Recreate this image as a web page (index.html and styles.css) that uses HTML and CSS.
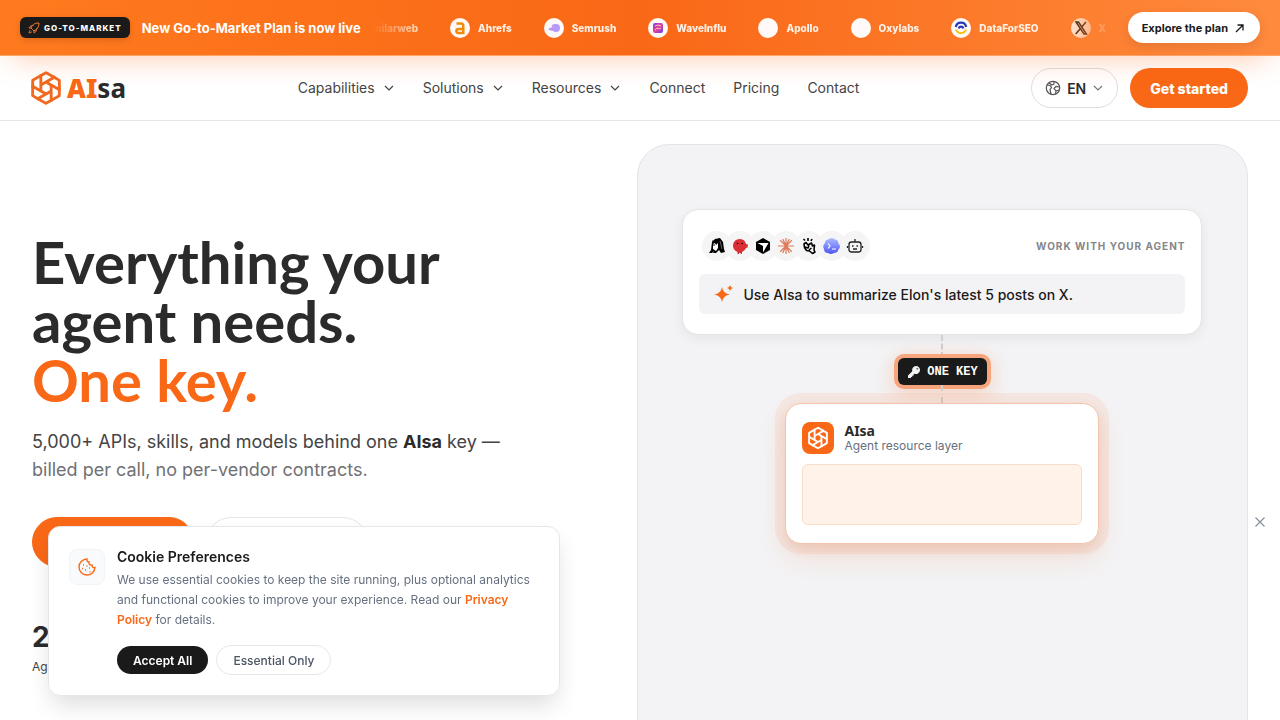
FILE: index.html
```html
<!DOCTYPE html>
<html lang="en">
<head>
<meta charset="utf-8">
<meta name="viewport" content="width=device-width, initial-scale=1">
<title>AIsa</title>
<link rel="stylesheet" href="styles.css">
</head>
<body>
<svg class="defs" aria-hidden="true">
  <symbol id="knot" viewBox="-17 -17 34 34">
    <g fill="none" stroke="currentColor" stroke-width="2.700" stroke-linejoin="round">
      <path id="blade" d="M12.600 2.500V-7.200L6.500 -10.800M-4.900 -2.800L0 -5.600L7 -9.700"/>
      <use href="#blade" transform="rotate(60)"/>
      <use href="#blade" transform="rotate(120)"/>
      <use href="#blade" transform="rotate(180)"/>
      <use href="#blade" transform="rotate(240)"/>
      <use href="#blade" transform="rotate(300)"/>
    </g>
  </symbol>
  <symbol id="chevron" viewBox="0 0 12 12"><path d="M2 4l4 4 4-4" fill="none" stroke="currentColor" stroke-width="1.200"/></symbol>
</svg>

<aside class="promo">
  <span class="badge">
    <svg viewBox="0 0 24 24" width="12" height="12" fill="none" stroke="currentColor" stroke-width="2"><path d="M9 15l-3-3c2-6 6-10 16-10 0 8-4 13-10 16zM6 12H2s1-5 9-5M12 18v4s5-1 5-9M5 16c-2 1-3 6-3 6s5-1 6-3"/></svg>
    GO-TO-MARKET
  </span>
  <strong class="promo-text">New Go-to-Market Plan is now live</strong>
  <div class="marquee">
    <ul class="track">
      <li><i class="dot"></i>Similarweb</li>
      <li><i class="dot"><svg viewBox="0 0 20 20"><path d="M6.500 5.500h4.500q2.300 0 2.300 2.300V15H8.700q-2.300 0-2.300-2t2.300-2h4.500" fill="none" stroke="#f18a08" stroke-width="2.500"/></svg></i>Ahrefs</li>
      <li><i class="dot"><svg viewBox="0 0 20 20"><circle cx="12" cy="10" r="4" fill="#b79af8"/><path d="M4 11l6-3v5l-4-.500zM7 7l5-1-2 3z" fill="#b79af8"/></svg></i>Semrush</li>
      <li><i class="dot"><svg viewBox="0 0 20 20"><defs><linearGradient id="wave" x2="1" y2="1"><stop stop-color="#7044e8"/><stop offset=".5" stop-color="#ed3e9c"/><stop offset="1" stop-color="#5647ed"/></linearGradient></defs><rect x="5" y="5" width="10" height="10" rx="2" fill="url(#wave)"/><path d="M7 8q3-2 6 0M7 12l2-2 2 1 2-1" fill="none" stroke="#ffc4a7"/></svg></i>WaveInflu</li>
      <li><i class="dot"></i>Apollo</li>
      <li><i class="dot"></i>Oxylabs</li>
      <li><i class="dot"><svg viewBox="0 0 20 20" fill="none" stroke-width="2.200"><path d="M4.800 9a5.300 5.300 0 0 1 10.400 0M7.800 10.500a2.300 2.300 0 0 1 4.500 0" stroke="#2639b8"/><path d="M5 11.500a5.300 5.300 0 0 0 10 0" stroke="#f4c51c"/></svg></i>DataForSEO</li>
      <li><i class="dot"><svg viewBox="0 0 20 20"><path d="M5 4h2.500L15.500 16H13zM15 4l-4.600 5.300M9 11l-4.300 5" fill="none" stroke="#111" stroke-width="1.500"/></svg></i>X</li>
    </ul>
  </div>
  <a class="promo-link" href="#plan">Explore the plan
    <svg viewBox="0 0 12 12" width="12" height="12" fill="none" stroke="currentColor" stroke-width="1.300"><path d="M2 10l7-7M3.500 3h5.500v5.500"/></svg>
  </a>
</aside>

<header class="header">
  <a class="logo" href="#home"><svg width="36" height="36"><use href="#knot"/></svg><span class="wordmark"><b>AI</b>sa</span></a>
  <nav class="nav">
    <button type="button">Capabilities <svg width="12" height="12"><use href="#chevron"/></svg></button>
    <button type="button">Solutions <svg width="12" height="12"><use href="#chevron"/></svg></button>
    <button type="button">Resources <svg width="12" height="12"><use href="#chevron"/></svg></button>
    <a href="#connect">Connect</a>
    <a href="#pricing">Pricing</a>
    <a href="#contact">Contact</a>
  </nav>
  <div class="actions">
    <button class="lang" type="button">
      <svg class="globe" viewBox="0 0 16 16" width="16" height="16" fill="none" stroke="currentColor" stroke-width="1.200"><circle cx="8" cy="8" r="6.700"/><path d="M2 5l3 .5 1.500 2L5 9.500 6 14M4 3l3 2 2-1V1.500M14.500 7L11 6.500 9 8.500l2 2.500-.5 3M11 11l3-1"/></svg>
      EN <svg class="muted" width="12" height="12"><use href="#chevron"/></svg>
    </button>
    <a class="start" href="#start">Get started</a>
  </div>
</header>

<main class="hero">
  <section class="intro">
    <h1>Everything your<br>agent needs.<br><span>One key.</span></h1>
    <p class="lead">5,000+ APIs, skills, and models behind one <strong>AIsa</strong> key —<br><span>billed per call, no per-vendor contracts.</span></p>
    <div class="ctas"><a class="cta primary" href="#start">Get started</a><a class="cta" href="#contact">Contact</a></div>
    <div class="stat"><strong>2</strong><span>Ag</span></div>
  </section>

  <section class="stage">
    <article class="prompt-card">
      <div class="prompt-head">
        <div class="agents">
          <span><svg viewBox="0 0 18 18"><path d="M1 16l2-3 1-8 3-3 5-1 3 4 1 7 1 3-4 1-2-3-3 3H5l1-2-2 2z"/><path d="M5 7l2-1 1 2 2-2v5l-2 3-3-2z" fill="#fff"/><path d="M5 8h2M4 4l7 1" stroke="#000"/><path d="M12 4l2 8" stroke="#aaa" stroke-width=".6"/></svg></span>
          <span><svg viewBox="0 0 18 18"><path d="M9 2a6.500 6.500 0 0 1 6 5l2 .5-.5 3L15 11a7 7 0 0 1-4 4v2H9.800v-1H8v1H6.500v-2A7 7 0 0 1 2 8a6.500 6.500 0 0 1 7-6z" fill="#dc2f35"/><circle cx="6.500" cy="6.500" r=".8"/><circle cx="11" cy="6.500" r=".8"/></svg></span>
          <span><svg viewBox="0 0 18 18"><path d="M9 1l7 4v8l-7 4-7-4V5z"/><path d="M3.500 6h11L9 15.500V9z" fill="#fff"/></svg></span>
          <span><svg viewBox="0 0 18 18" stroke="#dd7958" stroke-width="1.200"><path d="M9 1v16M1 9h16M3.200 3.300l11.600 11.400M3.200 14.700L14.800 3.300M5.700 1.900l6.600 14.200M5.700 16.100l6.600-14.200"/></svg></span>
          <span><svg viewBox="0 0 18 18" fill="none" stroke="#000" stroke-width="1.600" stroke-linejoin="round"><path d="M4 7l2-1.500 2 2.500 3.500-2 1 3 2-1-.5 5 1 2-2.500 1.500-3-2.500-3-.5-2-3zM5 10l3 1 1-2.500M9 13l2.500-2M5 3.500L3.500 2M8 4V1M11 4l1-2"/></svg></span>
          <span><svg viewBox="0 0 18 18"><defs><linearGradient id="cloud" x2="0" y2="1"><stop stop-color="#aebbff"/><stop offset="1" stop-color="#4f57f5"/></linearGradient></defs><path d="M5 2.500q4-3 7 0 3 0 3.500 4 3 3 0 6-1 3.500-4.500 3.500-3 2-6 0-4 0-4-4-2-3 1-6 0-3 3-3.500z" fill="url(#cloud)"/><path d="M5 6.500l2 2.500-2 2.500M9 12h4" fill="none" stroke="#fff" stroke-width="1.200"/></svg></span>
          <span><svg viewBox="0 0 18 18" fill="none" stroke="#222" stroke-width="1.300"><rect x="3" y="5" width="12" height="10" rx="2.500"/><path d="M9 5V2M1.500 9v2M16.500 9v2M6 9h1.500M10.500 9H12M7 12h4"/></svg></span>
        </div>
        <span class="eyebrow">WORK WITH YOUR AGENT</span>
      </div>
      <p class="prompt"><svg viewBox="0 0 20 20" width="20" height="20" fill="#f96816"><path d="M9 3q1 6.500 8 7.500-7 1-8 7.500-1-6.500-8-7.500 7-1 8-7.500zM17 1q.5 2.500 3 3-2.500.5-3 3-.5-2.500-3-3 2.500-.5 3-3z"/></svg>Use AIsa to summarize Elon's latest 5 posts on X.</p>
    </article>
    <div class="wire"></div>
    <div class="key"><svg viewBox="0 0 14 14" width="14" height="14"><path d="M9 1a4 4 0 1 1-1.500 7.700L6.500 9.500v1.200H5.200V12H4v1H1v-2.500l4.300-4.200A4 4 0 0 1 9 1z" fill="#f4f4f4"/><circle cx="10.300" cy="3.700" r="1" fill="#777"/></svg>ONE KEY</div>
    <div class="wire lower"></div>
    <article class="layer-card">
      <div class="layer-head">
        <span class="layer-logo"><svg width="24" height="24"><use href="#knot"/></svg></span>
        <div><h2>AIsa</h2><p>Agent resource layer</p></div>
      </div>
      <div class="slot"></div>
    </article>
  </section>
</main>

<section class="cookie" aria-labelledby="cookie-title">
  <span class="cookie-icon"><svg viewBox="0 0 20 20" width="20" height="20" fill="none" stroke="#f96816" stroke-width="1.400"><path d="M10 2a8 8 0 1 0 8 8.500c-2 .5-3-.5-3-2.500-2 .5-3.500-.8-3-3-1.500 0-2.300-1-2-3z"/><path d="M6 8h1M8 13h1M12 11h1M12.500 15h1M5 11.500h1M9.500 9h1"/></svg></span>
  <div>
    <h2 id="cookie-title">Cookie Preferences</h2>
    <p>We use essential cookies to keep the site running, plus optional analytics and functional cookies to improve your experience. Read our <a href="#privacy">Privacy Policy</a> for details.</p>
    <div class="cookie-actions"><button class="accept" type="button">Accept All</button><button class="essential" type="button">Essential Only</button></div>
  </div>
</section>
<button class="dismiss" type="button" aria-label="Close"><svg viewBox="0 0 12 12" width="12" height="12" fill="none" stroke="currentColor" stroke-width="1.300"><path d="M1.500 1.500l9 9M10.500 1.500l-9 9"/></svg></button>
</body>
</html>
```

FILE: styles.css
```css
* { box-sizing: border-box; }
body { margin: 0; font-family: Inter, "Liberation Sans", sans-serif; color: #2b2b2b; background: #fff; overflow-x: hidden; }
a { color: inherit; text-decoration: none; }
button { font: inherit; color: inherit; background: none; border: 0; padding: 0; cursor: pointer; }
h1, h2, p, ul { margin: 0; padding: 0; }
svg { flex: none; }
.defs { position: absolute; width: 0; height: 0; }

.promo { position: relative; z-index: 2; display: flex; align-items: center; height: 56px; padding: 0 20px; color: #fff; background: linear-gradient(90deg, #ff7a1e, #f96816 50%, #ff8a3d); border-bottom: 1px solid #ffa366; box-shadow: 0 12px 30px -12px rgba(249, 104, 22, .4); }
.badge { display: flex; align-items: center; gap: 4px; height: 21px; padding: 0 8px; border-radius: 6px; background: #1a1a1a; font-size: 8px; font-weight: 800; letter-spacing: 1px; white-space: nowrap; box-shadow: 0 2px 6px rgba(0, 0, 0, .15); }
.badge svg { color: #f47b2f; }
.promo-text { margin-left: 12px; font-size: 13px; font-weight: 700; white-space: nowrap; }
.marquee { flex: 1; min-width: 0; overflow: hidden; margin: 0 12px 0 12px; mask-image: linear-gradient(90deg, transparent, #000 56px, #000 calc(100% - 56px), transparent); }
.track { display: flex; gap: 32px; margin-left: -38px; list-style: none; font-size: 10px; font-weight: 800; }
.track li { display: flex; align-items: center; gap: 8px; flex: none; color: #fff0e5; }
.dot { display: block; width: 20px; height: 20px; border-radius: 50%; background: #fffaf7; }
.dot svg { display: block; }
.promo-link { display: flex; align-items: center; gap: 6px; height: 31px; padding: 0 14px; border-radius: 16px; color: #1a1a1a; background: #fff; font-size: 11px; font-weight: 700; white-space: nowrap; box-shadow: 0 4px 12px rgba(0, 0, 0, .1); }

.header { display: flex; justify-content: space-between; align-items: center; height: 65px; padding: 0 32px; border-bottom: 1px solid #e5e5e5; }
.logo { display: flex; align-items: center; gap: 3px; margin-left: -4px; color: #f0691f; }
.wordmark { color: #2b2b2b; font: 700 26px/32px "Noto Sans", sans-serif; }
.wordmark b { color: #f96816; }
.nav { display: flex; align-items: center; gap: 28px; font-size: 14px; line-height: 20px; color: #444; }
.nav button { display: flex; align-items: center; gap: 8px; }
.actions { display: flex; justify-content: flex-end; gap: 12px; font-size: 14px; }
.lang { display: flex; align-items: center; gap: 6px; height: 40px; padding: 0 13px; border: 1px solid #dedede; border-radius: 20px; background: #fff; font-weight: 600; }
.lang .muted { color: #777; }
.lang .globe { color: #555; }
.start { display: flex; align-items: center; height: 40px; padding: 0 20px; border-radius: 20px; background: #f96816; color: #fff; font-weight: 800; white-space: nowrap; }

.hero { display: grid; grid-template-columns: 15fr 16fr; gap: 32px; padding: 23px 32px 32px; }
.intro { padding-top: 88px; }
h1 { font-family: Lato, Inter, sans-serif; font-size: 58px; line-height: 59px; font-weight: 700; white-space: nowrap; }
h1 span { color: #f96816; }
.lead { margin-top: 19px; font-size: 18px; line-height: 28px; color: #444; }
.lead strong { color: #2b2b2b; font-weight: 700; }
.lead span { color: #707174; }
.ctas { display: flex; gap: 12px; margin-top: 33px; }
.cta { display: flex; align-items: center; justify-content: center; width: 162px; height: 50px; border: 1px solid #e5e5e5; border-radius: 25px; font-weight: 600; }
.cta.primary { border-color: #f96816; background: #f96816; color: #fff; }
.stat { margin-top: 52px; }
.stat strong { display: block; font-size: 28px; line-height: 36px; }
.stat span { display: block; font-size: 12px; line-height: 24px; color: #444; }

.stage { display: flex; flex-direction: column; align-items: center; min-height: 640px; padding: 64px 32px; border: 1px solid #e4e4e7; border-radius: 32px; background: #f3f3f5; }
.prompt-card { width: 100%; max-width: 520px; padding: 21px 16px 20px; border: 1px solid #e4e4e7; border-radius: 16px; background: #fff; box-shadow: 0 4px 12px rgba(0, 0, 0, .06); }
.prompt-head { display: flex; align-items: center; justify-content: space-between; }
.agents { display: flex; padding-left: 3px; }
.agents span { display: grid; place-items: center; width: 30px; height: 30px; border-radius: 50%; background: #f5f5f6; }
.agents span + span { margin-left: -7px; }
.agents svg { width: 18px; height: 18px; }
.eyebrow { font-size: 10px; font-weight: 700; letter-spacing: 1px; color: #85868a; }
.prompt { display: flex; align-items: center; gap: 10px; height: 40px; margin-top: 13px; padding: 0 14px; border-radius: 6px; background: #f3f3f5; color: #1a1a1a; font-size: 14px; font-weight: 500; }
.wire { height: 23px; border-left: 2px dashed #cfcfd3; }
.wire.lower { height: 18px; }
.key { display: flex; align-items: center; gap: 6px; height: 27px; padding: 0 9px; border-radius: 6px; background: #1a1a1a; color: #fff; font: 700 12px/16px "Liberation Mono", monospace; box-shadow: 0 0 0 4px #f6a57d, 0 4px 20px 4px rgba(249, 104, 22, .25); }
.layer-card { width: 100%; max-width: 314px; padding: 18px 16px 18px; border: 1px solid #f2c4aa; border-radius: 16px; background: #fff; box-shadow: 0 0 0 10px rgba(249, 104, 22, .08), 0 12px 32px rgba(249, 104, 22, .15), 0 6px 12px rgba(160, 70, 30, .1); }
.layer-head { display: flex; align-items: center; gap: 10px; }
.layer-logo { display: grid; place-items: center; width: 32px; height: 32px; border-radius: 8px; background: #f96816; color: #fff; }
.layer-head h2 { font: 700 14px/15px "Noto Sans", sans-serif; }
.layer-head p { font-size: 12px; line-height: 15px; color: #667080; }
.slot { height: 61px; margin-top: 10px; border: 1px solid #f9dcc7; border-radius: 6px; background: #fff2e8; }

.cookie { position: fixed; z-index: 5; left: 48px; bottom: 24px; display: flex; gap: 12px; width: 512px; max-width: calc(100% - 96px); padding: 20px; border: 1px solid #e5e7eb; border-radius: 12px; background: #fff; box-shadow: 0 12px 24px -4px rgba(0, 0, 0, .14); }
.cookie-icon { display: grid; place-items: center; flex: none; width: 36px; height: 36px; margin-top: 2px; border: 1px solid #f3f4f6; border-radius: 8px; background: #f9fafb; }
.cookie h2 { font-size: 14px; line-height: 20px; font-weight: 600; color: #1a1a1a; }
.cookie p { margin-top: 3px; font-size: 12px; line-height: 20px; color: #667080; }
.cookie p a { color: #f96816; font-weight: 600; }
.cookie-actions { display: flex; align-items: center; gap: 8px; margin-top: 15px; font-size: 12px; }
.cookie-actions button { height: 30px; padding: 0 16px; border-radius: 15px; white-space: nowrap; }
.cookie-actions .accept { height: 28px; background: #1a1a1a; color: #fff; font-weight: 600; }
.cookie-actions .essential { border: 1px solid #e5e7eb; color: #4b5563; font-weight: 500; }
.dismiss { position: fixed; z-index: 5; right: 14px; top: 516px; display: flex; color: #8b93a1; }
```
